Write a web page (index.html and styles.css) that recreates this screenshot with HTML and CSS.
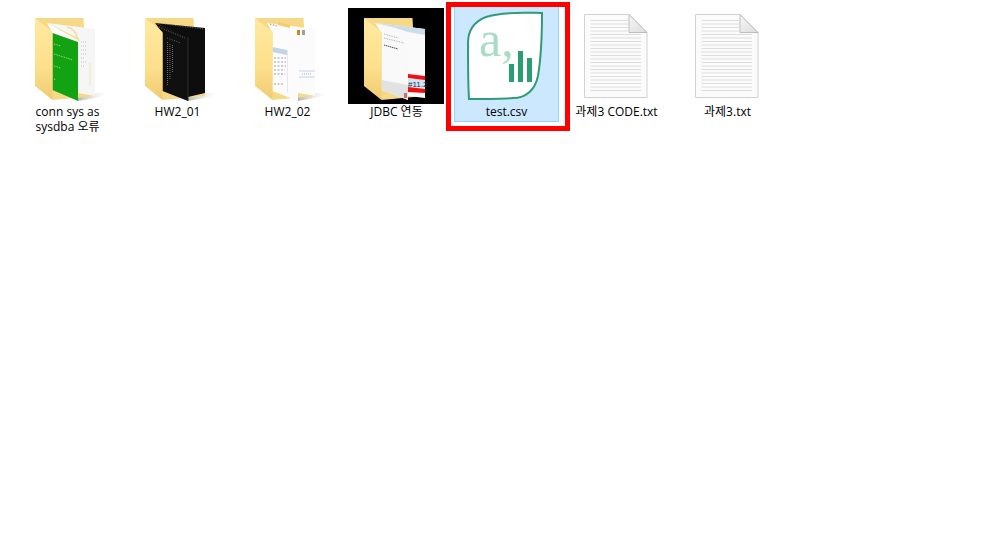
FILE: index.html
```html
<!DOCTYPE html>
<html lang="ko">

<head>
  <meta charset="UTF-8">
  <meta name="viewport" content="width=device-width, initial-scale=1.0">
  <title>파일 목록</title>
  <link rel="stylesheet" href="styles.css">
</head>
<body>

  <svg class="defs" width="0" height="0">
    <defs>
      <linearGradient id="flap-fill" x1="0" y1="0" x2="0" y2="1">
        <stop offset="0" stop-color="#ffe9a0"/>
        <stop offset="0.6" stop-color="#fde08c"/>
        <stop offset="1" stop-color="#eecb70"/>
      </linearGradient>
      <linearGradient id="shadow-fill" x1="0" y1="0" x2="1" y2="0">
        <stop offset="0" stop-color="#b5b5b5"/>
        <stop offset="1" stop-color="#ffffff" stop-opacity="0"/>
      </linearGradient>
      <linearGradient id="fold-fill" x1="0" y1="0" x2="1" y2="1">
        <stop offset="0" stop-color="#f7f7f7"/>
        <stop offset="1" stop-color="#dcdcdc"/>
      </linearGradient>
      <symbol id="folder-back" viewBox="0 0 96 96">
        <polygon points="16,10 64.5,10 65.5,30 76,88 33.5,92" fill="#f6d987"/>
      </symbol>
      <symbol id="folder-flap" viewBox="0 0 96 96">
        <polygon points="16,10 33.5,24 33.5,92 16,78" fill="url(#flap-fill)"/>
      </symbol>
      <symbol id="folder-shadow" viewBox="0 0 96 96">
        <polygon points="59,84 76,85 92,85 76,90 59,93" fill="url(#shadow-fill)"/>
      </symbol>
      <symbol id="doc" viewBox="0 0 96 96">
        <polygon points="16.5,6.500 61,6.500 79,24.500 79,89.500 16.500,89.500" fill="#fbfbfb" stroke="#d2d2d2"/>
        <path d="M22.500 12.500H60M22.500 16H60M22.500 19.500H60M22.500 23H60M22.500 26.500H73M22.500 30H73M22.500 33.500H73M22.500 37H73M22.500 40.500H73M22.500 44H73M22.500 47.500H73M22.500 51H73M22.500 54.500H73M22.500 58H73M22.500 61.500H73M22.500 65H73M22.500 68.500H73M22.500 72H73M22.500 75.500H73M22.500 79H73M22.500 82.500H73" stroke="#dddddd" fill="none"/>
        <polygon points="61,6.500 79,24.500 61,24.500" fill="url(#fold-fill)" stroke="#bdbdbd"/>
      </symbol>
    </defs>
  </svg>

  <div class="file-list">

    <div class="file">
      <svg class="icon" viewBox="0 0 96 96">
        <use href="#folder-shadow"/>
        <use href="#folder-back"/>
        <polygon points="28,15 76,21 76,88 59,85 59,30" fill="#f6f6f6"/>
        <path d="M48 19C56 21 57 26 60 33" stroke="#f3dd9f" stroke-width="1.500" fill="none"/>
        <path d="M62 34H67M62 38H68M62 42H67M62 46H68M62 50H66M62 54H68M62 58H66" stroke="#c2c2c2" stroke-dasharray="1 1" fill="none"/>
        <path d="M71 55V78" stroke="#eee3b8" fill="none"/>
        <polygon points="28,15 59,32 59,36 33.500,25" fill="#ffffff"/>
        <polygon points="33.500,25 59,34 59,93 33.500,82" fill="#13a312"/>
        <path d="M35 36L42 38M35 46L54 52M35 58L42 60M35 71L37 72" stroke="#8fd683" stroke-dasharray="1.500 1" fill="none"/>
        <use href="#folder-flap"/>
      </svg>
      <div class="name">conn sys as<br>sysdba 오류</div>
    </div>

    <div class="file">
      <svg class="icon" viewBox="0 0 96 96">
        <use href="#folder-shadow"/>
        <use href="#folder-back"/>
        <polygon points="26,15 76,20 76,85 59,89 59,30" fill="#0d0d0d"/>
        <polygon points="26,15 59,29 59,93 33.500,83 33.500,25" fill="#101010"/>
        <path d="M36 16L74 21M30 19L56 30M38 30L52 35" stroke="#6f6f6f" stroke-dasharray="1 1.500" fill="none"/>
        <path d="M38.500 34V78M41 36V72M43.500 37V64" stroke="#6a6a6a" stroke-dasharray="1 1" fill="none"/>
        <line x1="59" y1="29" x2="59" y2="93" stroke="#2c2c2c"/>
        <use href="#folder-flap"/>
      </svg>
      <div class="name">HW2_01</div>
    </div>

    <div class="file">
      <svg class="icon" viewBox="0 0 96 96">
        <use href="#folder-shadow"/>
        <use href="#folder-back"/>
        <polygon points="28,15 76,21 76,88 59,85 59,30" fill="#fbfbfb"/>
        <path d="M60 63H76M60 69H76" stroke="#c6d3e6" fill="none"/>
        <path d="M63 66H73" stroke="#9fb1c9" stroke-dasharray="1 1" fill="none"/>
        <polygon points="28,15 59,26 59,93 33.500,83 33.500,25" fill="#fcfcfc"/>
        <polygon points="33.500,39 48,42 48,47 33.500,44" fill="#c3d3e8"/>
        <line x1="48.500" y1="42" x2="48.500" y2="85" stroke="#e4e8ef"/>
        <path d="M35 50H47M35 54H47M35 58H47M35 62H46M35 66H46M35 76H44" stroke="#9a9fab" stroke-dasharray="2 1.500" fill="none"/>
        <polygon points="39,14 51,17 51,20 39,17" fill="#f0cc6a"/>
        <rect x="58" y="22" width="3" height="5" fill="#c9882e"/>
        <rect x="63" y="22" width="3" height="5" fill="#a79e8f"/>
        <path d="M31 16L38 18" stroke="#c4875a" stroke-dasharray="1.500 1.500" fill="none"/>
        <use href="#folder-flap"/>
      </svg>
      <div class="name">HW2_02</div>
    </div>

    <div class="file">
      <svg class="icon icon-black" viewBox="0 0 96 96">
        <use href="#folder-back"/>
        <polygon points="28,15 77,21 77,90 60,88 60,26" fill="#fafafa"/>
        <polygon points="28,15 77,21 77,27 60,24 44,19" fill="#ccdcec"/>
        <rect x="60" y="71" width="17" height="10" fill="#cfe4f6"/>
        <text class="tag" x="60" y="79">#11.2</text>
        <polygon points="60,66 77,68 77,72 60,70" fill="#f01010"/>
        <polygon points="60,79 77,81 77,85 60,84" fill="#f01010"/>
        <polygon points="27,15 60,25 60,92 33.500,82 33.500,25" fill="#f9f9f9"/>
        <path d="M36 26L50 30M36 30L56 35" stroke="#b8b8b8" stroke-dasharray="1.500 1" fill="none"/>
        <path d="M36 37L50 41" stroke="#555" stroke-dasharray="1.500 .5" fill="none"/>
        <polygon points="33.500,72 60,77 60,92 33.500,82" fill="#e2e2e2"/>
        <rect x="56" y="85" width="3" height="5" fill="#d96a6a"/>
        <use href="#folder-flap"/>
      </svg>
      <div class="name">JDBC 연동</div>
    </div>

    <div class="file selected">
      <svg class="icon" viewBox="0 0 96 96">
        <path class="csv-sheet" d="M84 5C70 5 45 3 28 9C15 14 10 24 10 35C10 55 10 75 11 91C25 91 45 91 55 90C68 90 77 82 80 68C83 50 84 25 84 5Z"/>
        <text class="csv-letter" x="21" y="48">a,</text>
        <rect class="csv-bar" x="51" y="56" width="5" height="18"/>
        <rect class="csv-bar" x="60" y="43" width="5" height="31"/>
        <rect class="csv-bar" x="69" y="50" width="5" height="24"/>
      </svg>
      <div class="name">test.csv</div>
    </div>

    <div class="file">
      <svg class="icon" viewBox="0 0 96 96"><use href="#doc"/></svg>
      <div class="name">과제3 CODE.txt</div>
    </div>

    <div class="file">
      <svg class="icon" viewBox="0 0 96 96"><use href="#doc"/></svg>
      <div class="name">과제3.txt</div>
    </div>

  </div>

</body>
</html>
```

FILE: styles.css
```css
* {
  box-sizing: border-box;
  margin: 0;
  padding: 0;
}

body {
  background-color: #fff;
  font-family: "Open Sans", "Noto Sans CJK KR", sans-serif;
  font-size: 12px;
  color: #000;
}

.defs {
  display: block;
  height: 0;
}

.file-list {
  display: grid;
  grid-template-columns: 110px 110px 109px 110px 110px 111px 110px;
  align-items: start;
  padding: 6px 0 0 15px;
}

.file {
  position: relative;
  width: 105px;
  padding: 1px 3px 2px;
  border: 1px solid transparent;
}

.icon {
  display: block;
  width: 96px;
  height: 96px;
}

.icon-black {
  background-color: #000;
}

.name {
  margin: 0 -3px;
  line-height: 15px;
  text-align: center;
}

.tag {
  font-size: 8px;
  font-family: "Liberation Sans", sans-serif;
  fill: #1f3044;
}

.selected {
  background-color: #cce8ff;
  border-color: #99d1ff;
}

/* red box drawn over the screenshot */
.selected::after {
  content: "";
  position: absolute;
  top: -5px;
  left: -9px;
  right: -12px;
  bottom: -10px;
  border: 5px solid #f00;
}

.csv-sheet {
  fill: #fff;
  stroke: #2f9c76;
  stroke-width: 2;
}

.csv-letter {
  font-family: "Liberation Serif", serif;
  font-size: 50px;
  fill: #a9dcc7;
}

.csv-bar {
  fill: #2b9d72;
}
```
